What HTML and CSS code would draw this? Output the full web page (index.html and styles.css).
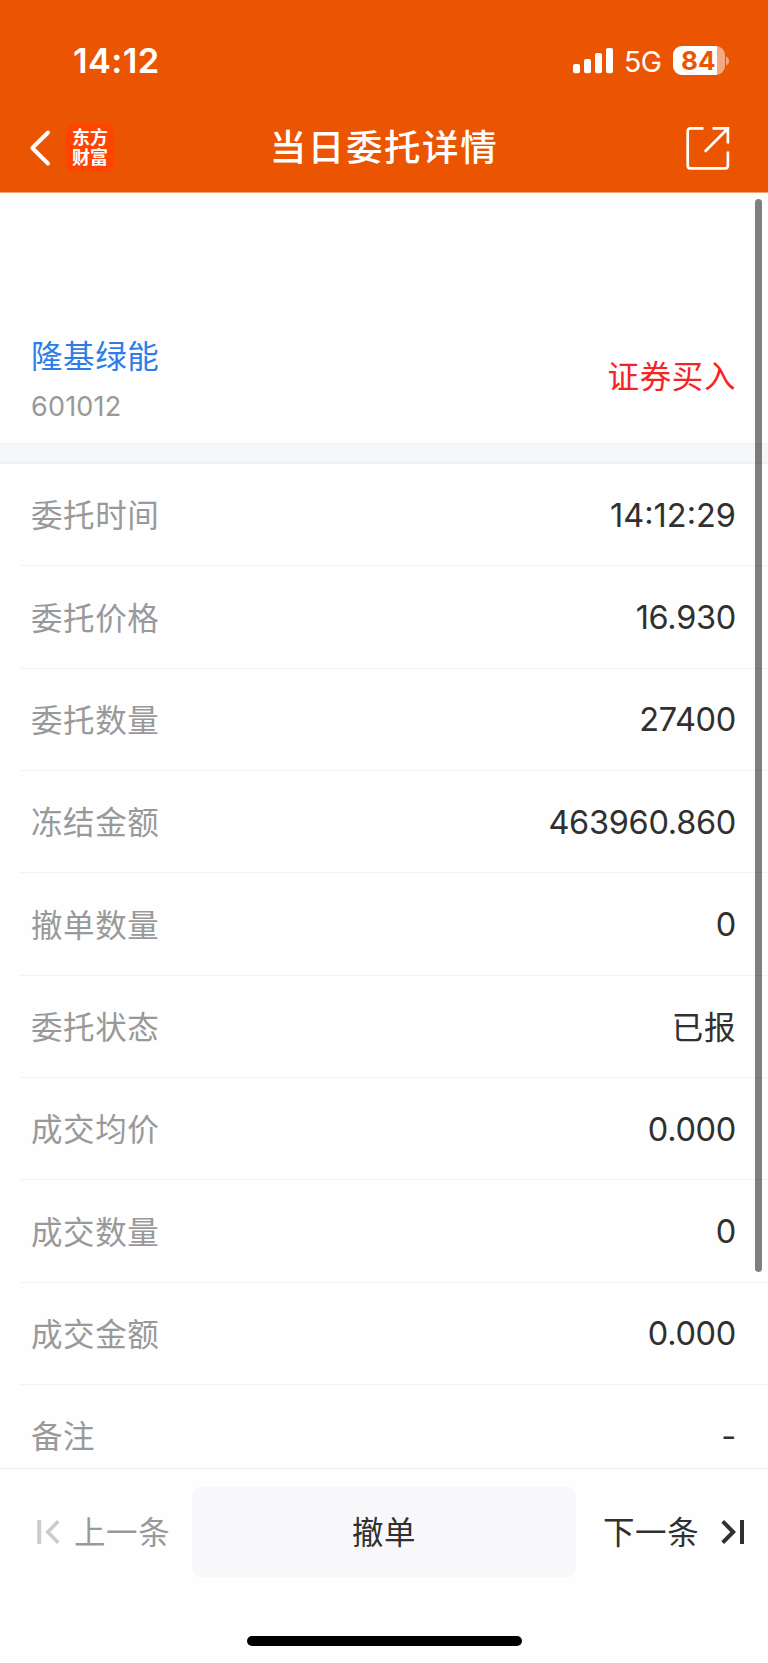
FILE: index.html
```html
<!DOCTYPE html>
<html lang="zh-CN">
<head>
<meta charset="utf-8">
<title>当日委托详情</title>
<link rel="stylesheet" href="styles.css">
</head>
<body>
<div class="screen">
  <header class="header">
    <div class="status">
      <span class="time">14:12</span>
      <div class="status-right">
        <svg class="signal" width="40" height="26" viewBox="0 0 40 26" fill="#fff">
          <rect x="0" y="16" width="7" height="9.3" rx="2"/>
          <rect x="11" y="11" width="7" height="14.3" rx="2"/>
          <rect x="22" y="5" width="7" height="20.3" rx="2"/>
          <rect x="33" y="0" width="7" height="25.3" rx="2"/>
        </svg>
        <span class="net">5G</span>
        <span class="battery"><span class="battery-level">84</span></span>
        <svg class="battery-cap" width="4" height="10" viewBox="0 0 4 10"><path d="M0 0.5C4 2 4 8 0 9.5Z" fill="#f4a57c"/></svg>
      </div>
    </div>
    <nav class="nav">
      <div class="nav-left">
        <svg width="22" height="38" viewBox="0 0 22 38" fill="none" stroke="#fff" stroke-width="4" stroke-linecap="round" stroke-linejoin="round"><path d="M19 3.5 3.3 19 19 34.5"/></svg>
        <div class="logo"><span>东方</span><span>财富</span></div>
      </div>
      <h1 class="title">当日委托详情</h1>
      <svg class="share" width="44" height="44" viewBox="0 0 44 44" fill="none" stroke="#fff" stroke-width="2.7"><path d="M17.5 2.4H4.5Q1.7 2.4 1.7 5.2V39.5Q1.7 42.4 4.5 42.4H39Q41.9 42.4 41.9 39.5V25.5"/><path d="M26.5 2.4H41.9V17.5M41.6 2.7 18.8 25.8"/></svg>
    </nav>
  </header>
  <main class="content">
    <section class="stock">
      <div>
        <div class="stock-name">隆基绿能</div>
        <div class="stock-code">601012</div>
      </div>
      <div class="side">证券买入</div>
    </section>
    <div class="band"></div>
    <div class="rows">
      <div class="row"><span class="label">委托时间</span><span class="value clock">14:12:29</span></div>
      <div class="row"><span class="label">委托价格</span><span class="value">16.930</span></div>
      <div class="row"><span class="label">委托数量</span><span class="value">27400</span></div>
      <div class="row"><span class="label">冻结金额</span><span class="value">463960.860</span></div>
      <div class="row"><span class="label">撤单数量</span><span class="value">0</span></div>
      <div class="row"><span class="label">委托状态</span><span class="value han">已报</span></div>
      <div class="row"><span class="label">成交均价</span><span class="value">0.000</span></div>
      <div class="row"><span class="label">成交数量</span><span class="value">0</span></div>
      <div class="row"><span class="label">成交金额</span><span class="value">0.000</span></div>
      <div class="row"><span class="label">备注</span><span class="value">-</span></div>
    </div>
    <div class="scrollbar"></div>
  </main>
  <footer class="footer">
    <div class="actions">
      <div class="prev">
        <svg width="24" height="26" viewBox="0 0 24 26" fill="none" stroke="#ccc" stroke-width="4"><path d="M2.2 1V25"/><path d="M21.3 2.3 10.8 13 21.3 23.7" stroke-width="3.6"/></svg>
        <span>上一条</span>
      </div>
      <div class="cancel">撤单</div>
      <div class="next">
        <span>下一条</span>
        <svg width="24" height="26" viewBox="0 0 24 26" fill="none" stroke="#303030" stroke-width="4"><path d="M21 1V25"/><path d="M1.7 2.3 12.2 13 1.7 23.7"/></svg>
      </div>
    </div>
    <div class="home"></div>
  </footer>
</div>
</body>
</html>
```
FILE: styles.css
```css
* { box-sizing: border-box; }
body {
  margin: 0;
  background: #fff;
  font-family: Inter, "Noto Sans CJK SC", sans-serif;
  color: #303030;
}
.screen {
  width: 768px;
  height: 1663px;
  display: flex;
  flex-direction: column;
  background: #fefefe;
  overflow: hidden;
}
.header {
  height: 193px;
  flex: none;
  background: #eb5502;
  border-bottom: 1px solid #f4a070;
  color: #fff;
}
.status {
  height: 104px;
  padding: 17px 38px 0 73px;
  display: flex;
  align-items: center;
  justify-content: space-between;
}
.time { font-size: 34.5px; font-weight: 600; letter-spacing: 0.4px; line-height: 42px; padding-top: 1px; }
.status-right { display: flex; align-items: center; }
.net { font-size: 28.5px; margin-left: 11px; letter-spacing: -0.7px; width: 49px; padding-top: 1px; }
.battery {
  width: 52px;
  height: 29px;
  border-radius: 9px;
  overflow: hidden;
  background: #f4a981;
}
.battery-level {
  display: block;
  width: 44px;
  height: 29px;
  padding-left: 8px;
  background: #fff;
  color: #eb5502;
  font-size: 26px;
  font-weight: 700;
  line-height: 29px;
}
.battery-cap { margin-left: 1px; }
.nav {
  height: 88px;
  padding: 0 38px 0 29px;
  display: grid;
  grid-template-columns: 1fr auto 1fr;
  align-items: center;
}
.nav-left { display: flex; align-items: center; gap: 15px; }
.logo {
  width: 48px;
  height: 48px;
  border-radius: 9px;
  background: #ff4400;
  display: flex;
  flex-direction: column;
  align-items: center;
  justify-content: center;
  font-size: 18px;
  font-weight: 700;
  line-height: 20px;
}
.title {
  margin: 0;
  padding-left: 9px;
  font-size: 36.5px;
  font-weight: 500;
  letter-spacing: 1.6px;
  line-height: 50px;
}
.share { justify-self: end; }
.content {
  flex: 1;
  min-height: 0;
  overflow: hidden;
  position: relative;
}
.stock {
  height: 250px;
  padding: 142px 32px 0 31px;
  display: flex;
  justify-content: space-between;
}
.stock-name, .side, .label, .han, .actions {
  font-size: 31.5px;
  letter-spacing: 0.6px;
  line-height: 44px;
}
.stock-name { color: #2c7de8; }
.stock-code { color: #999; font-size: 27px; line-height: 36px; margin-top: 10px; letter-spacing: 0.2px; }
.side { color: #f62323; margin-top: 20px; }
.band {
  height: 21px;
  background: #f6f7f9;
  border-top: 1px solid #eff1f3;
  border-bottom: 2px solid #eff1f3;
}
.rows { padding-left: 20px; }
.row {
  height: 102.35px;
  padding: 1px 32px 0 11px;
  border-bottom: 1px solid #f2f2f2;
  display: flex;
  align-items: center;
  justify-content: space-between;
}
.label { color: #999; padding-top: 2px; }
.value { font-size: 32.5px; letter-spacing: -0.3px; }
.value.clock { letter-spacing: 0; }
.value.han { font-size: 31.5px; letter-spacing: 0.6px; padding-top: 2px; }
.scrollbar {
  position: absolute;
  top: 6px;
  right: 6px;
  width: 7px;
  height: 1073px;
  border-radius: 4px;
  background: rgba(0, 0, 0, 0.5);
}
.footer {
  height: 195px;
  flex: none;
  border-top: 1px solid #f0f0f0;
  display: flex;
  flex-direction: column;
  align-items: center;
}
.actions {
  width: 100%;
  height: 90px;
  margin-top: 18px;
  display: grid;
  grid-template-columns: 192px 384px 192px;
  align-items: center;
}
.prev, .next { display: flex; align-items: center; }
.prev span, .next span { padding-top: 2px; }
.prev { padding-left: 37px; gap: 13px; color: #999; }
.next { padding-left: 27px; gap: 22px; }
.cancel {
  height: 90px;
  border-radius: 10px;
  background: #f8f8fa;
  text-align: center;
  line-height: 92px;
}
.home {
  width: 275px;
  height: 10px;
  margin-top: 59px;
  border-radius: 5px;
  background: #000;
}
```
